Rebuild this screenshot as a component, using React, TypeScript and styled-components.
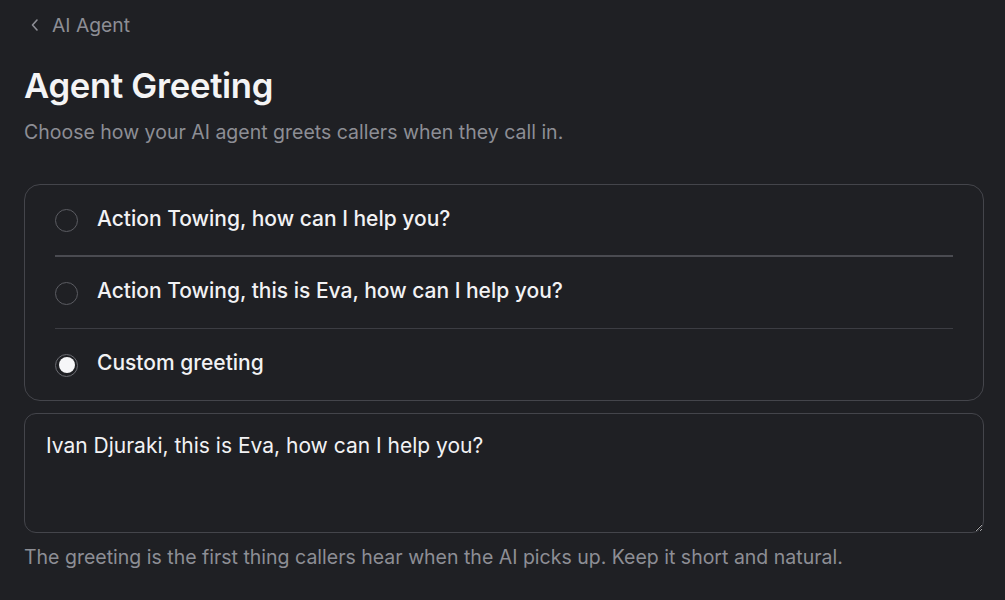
import React, { useState } from "react";
import styled, { createGlobalStyle } from "styled-components";

const GlobalStyle = createGlobalStyle`
  html, body {
    margin: 0;
    padding: 0;
    background: #1f2024;
  }
  body {
    font-family: Inter, "Noto Sans", sans-serif;
    color: #f2f2f4;
  }
`;

const Page = styled.div`
  min-height: 100vh;
  padding: 12px 21px 0 24px;
  box-sizing: border-box;
  display: flex;
  flex-direction: column;
`;

const BackLink = styled.a`
  display: flex;
  align-items: center;
  gap: 12px;
  padding-left: 6px;
  height: 26px;
  font-size: 19.3px;
  color: #8d8e95;
  text-decoration: none;
  cursor: pointer;
`;

const Title = styled.h1`
  margin: 25px 0 0;
  font-size: 34.7px;
  line-height: 44px;
  font-weight: 600;
  letter-spacing: -0.3px;
  color: #f4f4f5;
`;

const Subtitle = styled.p`
  margin: 12px 0 0;
  font-size: 19.5px;
  line-height: 26px;
  color: #8d8e95;
`;

const OptionCard = styled.div`
  margin-top: 39px;
  border: 1px solid #44454b;
  border-radius: 16px;
  padding: 0 30px;
`;

const OptionRow = styled.label<{ $divider?: "strong" | "soft" }>`
  display: flex;
  align-items: center;
  gap: 19px;
  height: ${(p) => (p.$divider ? 72 : 71)}px;
  padding-bottom: 4px;
  box-sizing: border-box;
  border-bottom: ${(p) =>
    p.$divider === "strong"
      ? "2px solid #4a4b51"
      : p.$divider
      ? "1px solid #3c3d43"
      : "none"};
  cursor: pointer;
`;

const Radio = styled.span<{ $checked: boolean }>`
  width: 23px;
  height: 23px;
  border-radius: 50%;
  border: 1px solid ${(p) => (p.$checked ? "#6a6b71" : "#5b5c62")};
  box-sizing: border-box;
  display: flex;
  align-items: center;
  justify-content: center;
  flex-shrink: 0;
  margin-top: 5px;
  &::after {
    content: "";
    width: 16px;
    height: 16px;
    border-radius: 50%;
    background: #f6f6f8;
    display: ${(p) => (p.$checked ? "block" : "none")};
  }
`;

const OptionText = styled.span`
  font-size: 21px;
  font-weight: 500;
  color: #f2f2f4;
`;

const GreetingInput = styled.textarea`
  margin-top: 12px;
  height: 120px;
  box-sizing: border-box;
  padding: 18px 21px;
  background: transparent;
  border: 1px solid #44454b;
  border-radius: 12px;
  font-family: Inter, "Noto Sans", sans-serif;
  font-size: 21px;
  line-height: 28px;
  color: #f2f2f4;
  resize: vertical;
  outline: none;
  color-scheme: dark;
`;

const Hint = styled.p`
  margin: 11px 0 0;
  font-size: 19.5px;
  line-height: 26px;
  color: #8d8e95;
`;

const options = [
  "Action Towing, how can I help you?",
  "Action Towing, this is Eva, how can I help you?",
  "Custom greeting",
];

const App = () => {
  const [selected, setSelected] = useState(2);
  const [text, setText] = useState(
    "Ivan Djuraki, this is Eva, how can I help you?"
  );

  return (
    <>
      <GlobalStyle />
      <Page>
        <BackLink>
          <svg width="10" height="14" viewBox="0 0 10 14" fill="none">
            <path
              d="M7 2 2.5 7 7 12"
              stroke="#8d8e95"
              strokeWidth={1.6}
              strokeLinecap="round"
              strokeLinejoin="round"
            />
          </svg>
          AI Agent
        </BackLink>
        <Title>Agent Greeting</Title>
        <Subtitle>Choose how your AI agent greets callers when they call in.</Subtitle>

        <OptionCard>
          {options.map((o, i) => (
            <OptionRow
              key={o}
              $divider={i === 0 ? "strong" : i === 1 ? "soft" : undefined}
              onClick={() => setSelected(i)}
            >
              <Radio $checked={selected === i} />
              <OptionText>{o}</OptionText>
            </OptionRow>
          ))}
        </OptionCard>

        <GreetingInput value={text} onChange={(e) => setText(e.target.value)} />
        <Hint>
          The greeting is the first thing callers hear when the AI picks up. Keep it short and natural.
        </Hint>
      </Page>
    </>
  );
};

export default App;
